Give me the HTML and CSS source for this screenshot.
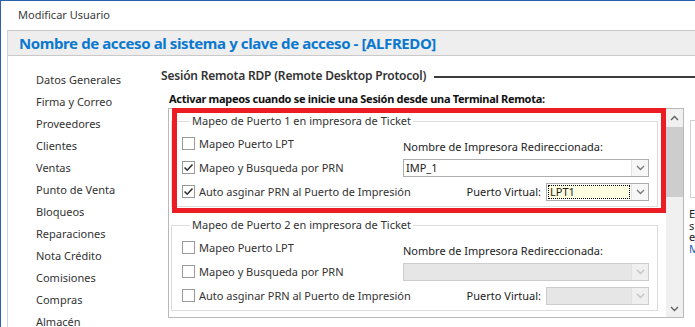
FILE: index.html
```html
<!DOCTYPE html>
<html lang="es">
<head>
    <meta charset="UTF-8">
    <title>Modificar Usuario</title>
    <link rel="stylesheet" href="styles.css">
</head>
<body>
    <div class="window">
        <div class="titlebar">Modificar Usuario</div>
        <div class="client">
            <div class="header">Nombre de acceso al sistema y clave de acceso - [ALFREDO]</div>
            <div class="main">
                <ul class="menu">
                    <li>Datos Generales</li>
                    <li>Firma y Correo</li>
                    <li>Proveedores</li>
                    <li>Clientes</li>
                    <li>Ventas</li>
                    <li>Punto de Venta</li>
                    <li>Bloqueos</li>
                    <li>Reparaciones</li>
                    <li>Nota Crédito</li>
                    <li>Comisiones</li>
                    <li>Compras</li>
                    <li>Almacén</li>
                </ul>
                <div class="content">
                    <div class="section-title">
                        <span>Sesión Remota RDP (Remote Desktop Protocol)</span>
                        <span class="rule"></span>
                    </div>
                    <div class="intro">Activar mapeos cuando se inicie una Sesión desde una Terminal Remota:</div>
                    <div class="row">
                        <div class="panel">
                            <div class="scroll-area">
                                <fieldset class="group">
                                    <legend>Mapeo de Puerto 1 en impresora de Ticket</legend>
                                    <div class="check"><span class="box"></span>Mapeo Puerto LPT</div>
                                    <div class="field-label">Nombre de Impresora Redireccionada:</div>
                                    <div class="check"><span class="box checked"><svg viewBox="0 0 11 11"><path d="M1.5 5.5 L4.2 8.2 L9.5 2.5" /></svg></span>Mapeo y Busqueda por PRN</div>
                                    <div class="combo">
                                        <span class="combo-value">IMP_1</span>
                                        <span class="combo-btn"><svg viewBox="0 0 9 6"><path d="M1 1 L4.5 4.5 L8 1" /></svg></span>
                                    </div>
                                    <div class="check"><span class="box checked"><svg viewBox="0 0 11 11"><path d="M1.5 5.5 L4.2 8.2 L9.5 2.5" /></svg></span>Auto asginar PRN al Puerto de Impresión</div>
                                    <div class="port">
                                        <span>Puerto Virtual:</span>
                                        <div class="combo small">
                                            <span class="combo-value focus">LPT1</span>
                                            <span class="combo-btn"><svg viewBox="0 0 9 6"><path d="M1 1 L4.5 4.5 L8 1" /></svg></span>
                                        </div>
                                    </div>
                                </fieldset>
                                <fieldset class="group">
                                    <legend>Mapeo de Puerto 2 en impresora de Ticket</legend>
                                    <div class="check"><span class="box"></span>Mapeo Puerto LPT</div>
                                    <div class="field-label">Nombre de Impresora Redireccionada:</div>
                                    <div class="check"><span class="box"></span>Mapeo y Busqueda por PRN</div>
                                    <div class="combo disabled">
                                        <span class="combo-value"></span>
                                        <span class="combo-btn"><svg viewBox="0 0 9 6"><path d="M1 1 L4.5 4.5 L8 1" /></svg></span>
                                    </div>
                                    <div class="check"><span class="box"></span>Auto asginar PRN al Puerto de Impresión</div>
                                    <div class="port">
                                        <span>Puerto Virtual:</span>
                                        <div class="combo small disabled">
                                            <span class="combo-value"></span>
                                            <span class="combo-btn"><svg viewBox="0 0 9 6"><path d="M1 1 L4.5 4.5 L8 1" /></svg></span>
                                        </div>
                                    </div>
                                </fieldset>
                            </div>
                            <div class="scrollbar">
                                <span class="arrow"><svg viewBox="0 0 9 6"><path d="M1 5 L4.5 1.5 L8 5" /></svg></span>
                                <span class="thumb"></span>
                                <span class="track"></span>
                                <span class="arrow"><svg viewBox="0 0 9 6"><path d="M1 1 L4.5 4.5 L8 1" /></svg></span>
                            </div>
                            <div class="highlight"></div>
                        </div>
                        <div class="side">
                            <div class="side-box"></div>
                            <p class="side-text">E<br>s<br>e<br><span class="link">M</span></p>
                        </div>
                    </div>
                </div>
            </div>
        </div>
    </div>
</body>
</html>
```

FILE: styles.css
```css
* {
    box-sizing: border-box;
}
html, body {
    margin: 0;
    width: 695px;
    height: 327px;
    overflow: hidden;
    background: #fff;
}
body {
    font-family: "Noto Sans", "Open Sans", sans-serif;
    font-size: 11px;
    color: #333;
}
.window {
    height: 327px;
    border-top: 1px solid #2a62ad;
    border-left: 1px solid #2a62ad;
    display: flex;
    flex-direction: column;
}
.titlebar {
    height: 29px;
    flex: none;
    padding-left: 17px;
    line-height: 28px;
    color: #3a3a3a;
}
.client {
    flex: 1;
    margin-left: 6px;
    border-left: 1px solid #d4d4d4;
    display: flex;
    flex-direction: column;
    min-height: 0;
}
.header {
    height: 26px;
    flex: none;
    background: #eeeeee;
    border-top: 1px solid #c9c9c9;
    border-bottom: 1px solid #c9c9c9;
    padding-left: 11px;
    line-height: 24px;
    font-size: 15px;
    letter-spacing: -0.4px;
    font-weight: bold;
    color: #0b78cf;
    white-space: nowrap;
}
.main {
    flex: 1;
    display: flex;
    min-height: 0;
}
.menu {
    list-style: none;
    margin: 0;
    padding: 13px 0 0 28px;
    width: 153px;
    flex: none;
}
.menu li {
    height: 22px;
    line-height: 22px;
    white-space: nowrap;
}
.content {
    flex: 1;
    padding-top: 12px;
    min-width: 0;
}
.section-title {
    display: flex;
    align-items: center;
    font-size: 12px;
    letter-spacing: -0.2px;
    font-weight: 600;
    line-height: 16px;
    color: #333;
    white-space: nowrap;
}
.section-title .rule {
    flex: 1;
    height: 2px;
    background: #3c3c3c;
    margin-left: 8px;
    margin-top: 2px;
}
.intro {
    margin: 7px 0 0 8px;
    font-weight: bold;
    letter-spacing: -0.3px;
    line-height: 16px;
    color: #111;
    white-space: nowrap;
}
.row {
    display: flex;
    margin-top: 1px;
    margin-left: 7px;
}
.panel {
    position: relative;
    width: 516px;
    height: 210px;
    flex: none;
    border: 1px solid #b9b9b9;
    display: flex;
}
.scroll-area {
    flex: 1;
    padding: 4px 8px 0 2px;
    overflow: hidden;
}
.group {
    margin: 0 0 10px;
    padding: 2px 0 3px 10px;
    border: 1px solid #dcdcdc;
    display: grid;
    grid-template-columns: 221px 246px;
    grid-template-rows: 24px 25px 23px;
    align-items: center;
}
.group legend {
    margin-left: 8px;
    padding: 0 2px;
    line-height: 16px;
    color: #333;
}
.check {
    display: flex;
    align-items: center;
    white-space: nowrap;
}
.box {
    width: 13px;
    height: 13px;
    border: 1px solid #9a9a9a;
    background: #fff;
    margin-right: 4px;
    flex: none;
    display: flex;
    align-items: center;
    justify-content: center;
}
.box svg {
    width: 11px;
    height: 11px;
    fill: none;
    stroke: #333;
    stroke-width: 1.6;
}
.field-label {
    align-self: end;
    line-height: 16px;
    color: #222;
    white-space: nowrap;
}
.combo {
    height: 18px;
    border: 1px solid #adadad;
    background: #fff;
    display: flex;
}
.combo-value {
    flex: 1;
    padding-left: 2px;
    line-height: 15px;
    color: #222;
}
.combo-value.focus {
    margin: 1px;
    background: #ffffe1;
    border: 1px dotted #000;
    padding-left: 1px;
    line-height: 12px;
}
.combo-btn {
    width: 17px;
    flex: none;
    border-left: 1px solid #e2e2e2;
    background: #f7f7f7;
    display: flex;
    align-items: center;
    justify-content: center;
}
.combo-btn svg, .arrow svg {
    width: 9px;
    height: 6px;
    fill: none;
    stroke: #7a7a7a;
    stroke-width: 1.4;
}
.combo.disabled {
    background: #e6e6e6;
    border-color: #cccccc;
}
.combo.disabled .combo-btn {
    background: #efefef;
}
.combo.disabled .combo-btn svg {
    stroke: #c4c4c4;
}
.port {
    display: flex;
    align-items: center;
    justify-content: flex-end;
    gap: 5px;
    white-space: nowrap;
    color: #222;
}
.combo.small {
    width: 103px;
}
.scrollbar {
    width: 17px;
    flex: none;
    background: #f0f0f0;
    display: flex;
    flex-direction: column;
}
.arrow {
    height: 17px;
    display: flex;
    align-items: center;
    justify-content: center;
}
.arrow svg {
    stroke: #606060;
}
.thumb {
    height: 70px;
    margin-top: 1px;
    background: #cdcdcd;
}
.track {
    flex: 1;
}
.highlight {
    position: absolute;
    left: 3px;
    top: -1px;
    width: 494px;
    height: 105px;
    border: 5px solid #ec1c24;
}
.side {
    margin-left: 5px;
    flex: 1;
    min-width: 0;
    overflow: hidden;
}
.side-box {
    height: 78px;
    margin: 12px 0 0 1px;
    border: 1px solid #d0d0d0;
    border-right: none;
}
.side-text {
    margin: 10px 0 0;
    font-size: 11px;
    line-height: 11.5px;
    color: #222;
}
.side-text .link {
    color: #1a5fb4;
}
```
